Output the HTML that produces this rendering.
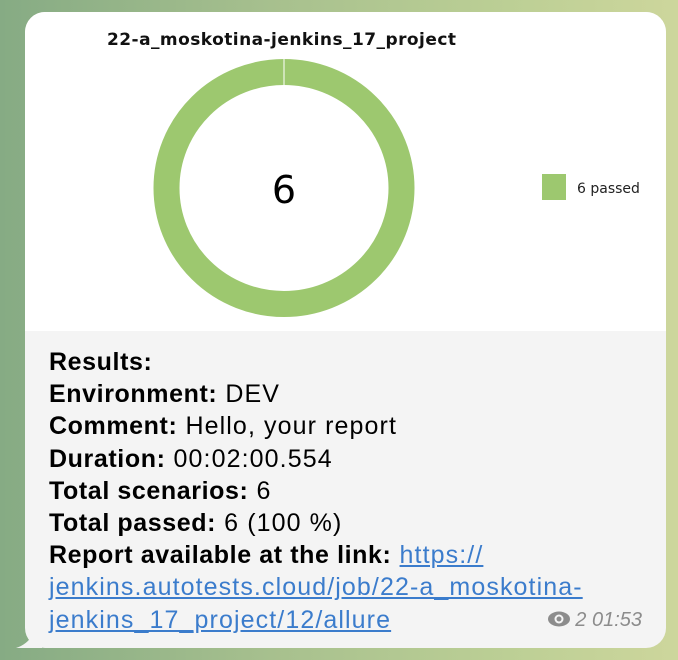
<!DOCTYPE html>
<html><head><meta charset="utf-8"><style>
html,body{margin:0;padding:0;}
body{width:678px;height:660px;overflow:hidden;position:relative;background:linear-gradient(90deg,#86ab84 0%,#a7c08e 40%,#bccf95 75%,#cdd69c 100%);font-family:"Liberation Sans",Arial,sans-serif;}
.bubble{position:absolute;left:25px;top:12px;width:641px;height:636px;border-radius:20px;background:#f4f4f4;overflow:hidden;}
.img{position:absolute;left:0;top:0;width:641px;height:319px;background:#fff;}
.title{position:absolute;left:82px;top:18px;font-family:"DejaVu Sans",sans-serif;font-weight:bold;font-size:17px;color:#111;letter-spacing:0.45px;white-space:nowrap;}
.txt{position:absolute;left:24px;top:334px;font-size:25px;line-height:32.2px;color:#000;letter-spacing:1.1px;white-space:nowrap;}
.txt b{font-weight:bold;letter-spacing:0.6px;}
.txt a{color:#3b7ccc;text-decoration:underline;}
.meta{position:absolute;right:24px;bottom:16px;font-size:20px;font-style:italic;color:#8c8c8c;}
</style></head><body>
<svg style="position:absolute;left:0;top:0" width="678" height="660"><path d="M42 610 L42 648 L16 648 Q36 642 42 610 Z" fill="#f4f4f4"/></svg>
<div class="bubble">
<div class="img">
<div class="title">22-a_moskotina-jenkins_17_project</div>
<svg style="position:absolute;left:0;top:0" width="641" height="319">
<ellipse cx="259" cy="176" rx="117.5" ry="116" fill="none" stroke="#9dc86f" stroke-width="26"/>
<line x1="259" y1="46" x2="259" y2="73" stroke="#fff" stroke-width="1"/>
<text x="259" y="191" text-anchor="middle" font-family="DejaVu Sans,sans-serif" font-size="38" fill="#000">6</text>
<rect x="517" y="162" width="24" height="26" fill="#9dc86f"/>
<text x="552" y="181" font-family="DejaVu Sans,sans-serif" font-size="14" fill="#222">6 passed</text>
</svg>
</div>
<div class="txt"><b>Results:</b><br><b>Environment:</b> DEV<br><b>Comment:</b> Hello, your report<br><b>Duration:</b> 00:02:00.554<br><b>Total scenarios:</b> 6<br><b>Total passed:</b> 6 (100 %)<br><b>Report available at the link:</b> <a>https://<br>jenkins.autotests.cloud/job/22-a_moskotina-<br>jenkins_17_project/12/allure</a></div>
<div class="meta"><svg width="24" height="16" viewBox="0 0 24 16" style="vertical-align:-1px;margin-right:4px"><ellipse cx="12" cy="8" rx="11" ry="7.5" fill="#8c8c8c"/><circle cx="12" cy="8" r="4.5" fill="#f4f4f4"/><circle cx="12" cy="8" r="2.5" fill="#8c8c8c"/></svg>2 01:53</div>
</div>
</body></html>
